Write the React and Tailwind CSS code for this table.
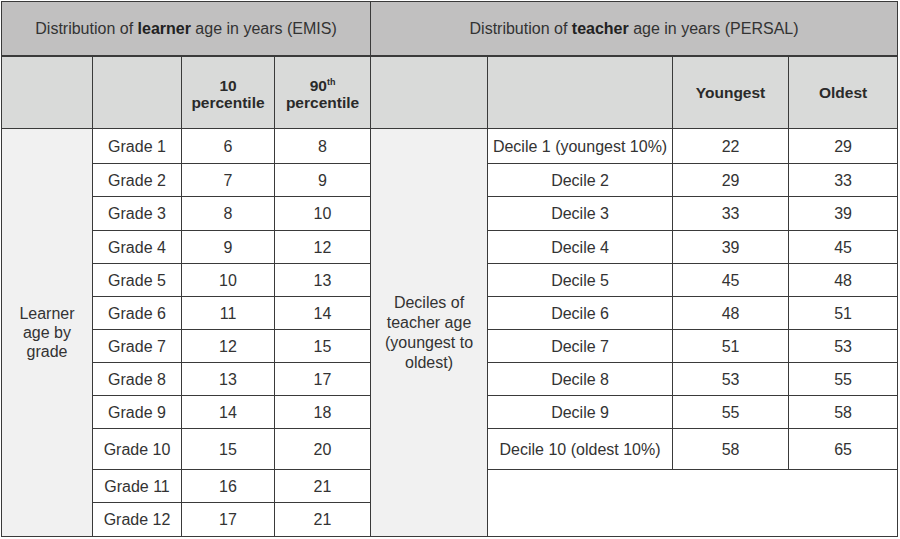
import React from "react";

const grades = [
  ["Grade 1", "6", "8"],
  ["Grade 2", "7", "9"],
  ["Grade 3", "8", "10"],
  ["Grade 4", "9", "12"],
  ["Grade 5", "10", "13"],
  ["Grade 6", "11", "14"],
  ["Grade 7", "12", "15"],
  ["Grade 8", "13", "17"],
  ["Grade 9", "14", "18"],
  ["Grade 10", "15", "20"],
  ["Grade 11", "16", "21"],
  ["Grade 12", "17", "21"],
];

const deciles = [
  ["Decile 1 (youngest 10%)", "22", "29"],
  ["Decile 2", "29", "33"],
  ["Decile 3", "33", "39"],
  ["Decile 4", "39", "45"],
  ["Decile 5", "45", "48"],
  ["Decile 6", "48", "51"],
  ["Decile 7", "51", "53"],
  ["Decile 8", "53", "55"],
  ["Decile 9", "55", "58"],
  ["Decile 10 (oldest 10%)", "58", "65"],
];

const rowH = ["h-[35px]", "h-[33px]", "h-[34px]", "h-[33px]", "h-[33px]", "h-[33px]", "h-[33px]", "h-[33px]", "h-[33px]", "h-[41px]", "h-[33px]", "h-[34px]"];

const cell = "border border-[#3a3a3a] text-center align-middle p-0";

export default function App() {
  return (
    <div className="bg-white w-[900px] h-[539px] pt-px pl-px" style={{ fontFamily: '"Liberation Sans", Arial, sans-serif' }}>
      <table className="table-fixed border-collapse w-[896px] text-[16px] text-[#333] leading-[19px]">
        <colgroup>
          <col className="w-[91px]" />
          <col className="w-[89px]" />
          <col className="w-[93px]" />
          <col className="w-[96px]" />
          <col className="w-[117px]" />
          <col className="w-[185px]" />
          <col className="w-[116px]" />
          <col className="w-[109px]" />
        </colgroup>
        <thead>
          <tr className="h-[54px] bg-[#c1c0c0]">
            <th colSpan={4} className={`${cell} font-normal border-b-2`}>
              Distribution of <b className="font-bold text-[#222]">learner</b> age in years (EMIS)
            </th>
            <th colSpan={4} className={`${cell} font-normal border-b-2`}>
              Distribution of <b className="font-bold text-[#222]">teacher</b> age in years (PERSAL)
            </th>
          </tr>
          <tr className="h-[73px] bg-[#d9dad9] text-[15.5px] leading-[17px] font-bold text-[#2a2a2a]">
            <th className={cell}></th>
            <th className={cell}></th>
            <th className={`${cell} pt-1`}>10<br />percentile</th>
            <th className={`${cell} pt-1`}>
              90<span className="text-[9px] leading-none relative top-[-6px]">th</span>
              <br />percentile
            </th>
            <th className={cell}></th>
            <th className={cell}></th>
            <th className={cell}>Youngest</th>
            <th className={cell}>Oldest</th>
          </tr>
        </thead>
        <tbody>
          {grades.map((g, i) => (
            <tr key={i} className={rowH[i]}>
              {i === 0 && (
                <td rowSpan={12} className={`${cell} bg-[#f1f1f1] px-2 leading-[19px]`}>
                  Learner age by grade
                </td>
              )}
              <td className={`${cell} bg-white`}>{g[0]}</td>
              <td className={`${cell} bg-white`}>{g[1]}</td>
              <td className={`${cell} bg-white`}>{g[2]}</td>
              {i === 0 && (
                <td rowSpan={12} className={`${cell} bg-[#f1f1f1] px-2 leading-[20px]`}>
                  Deciles of teacher age (youngest to oldest)
                </td>
              )}
              {i < 10 ? (
                <>
                  <td className={`${cell} bg-white whitespace-nowrap`}>{deciles[i][0]}</td>
                  <td className={`${cell} bg-white`}>{deciles[i][1]}</td>
                  <td className={`${cell} bg-white`}>{deciles[i][2]}</td>
                </>
              ) : i === 10 ? (
                <td colSpan={3} rowSpan={2} className={`${cell} bg-white`}></td>
              ) : null}
            </tr>
          ))}
        </tbody>
      </table>
    </div>
  );
}
